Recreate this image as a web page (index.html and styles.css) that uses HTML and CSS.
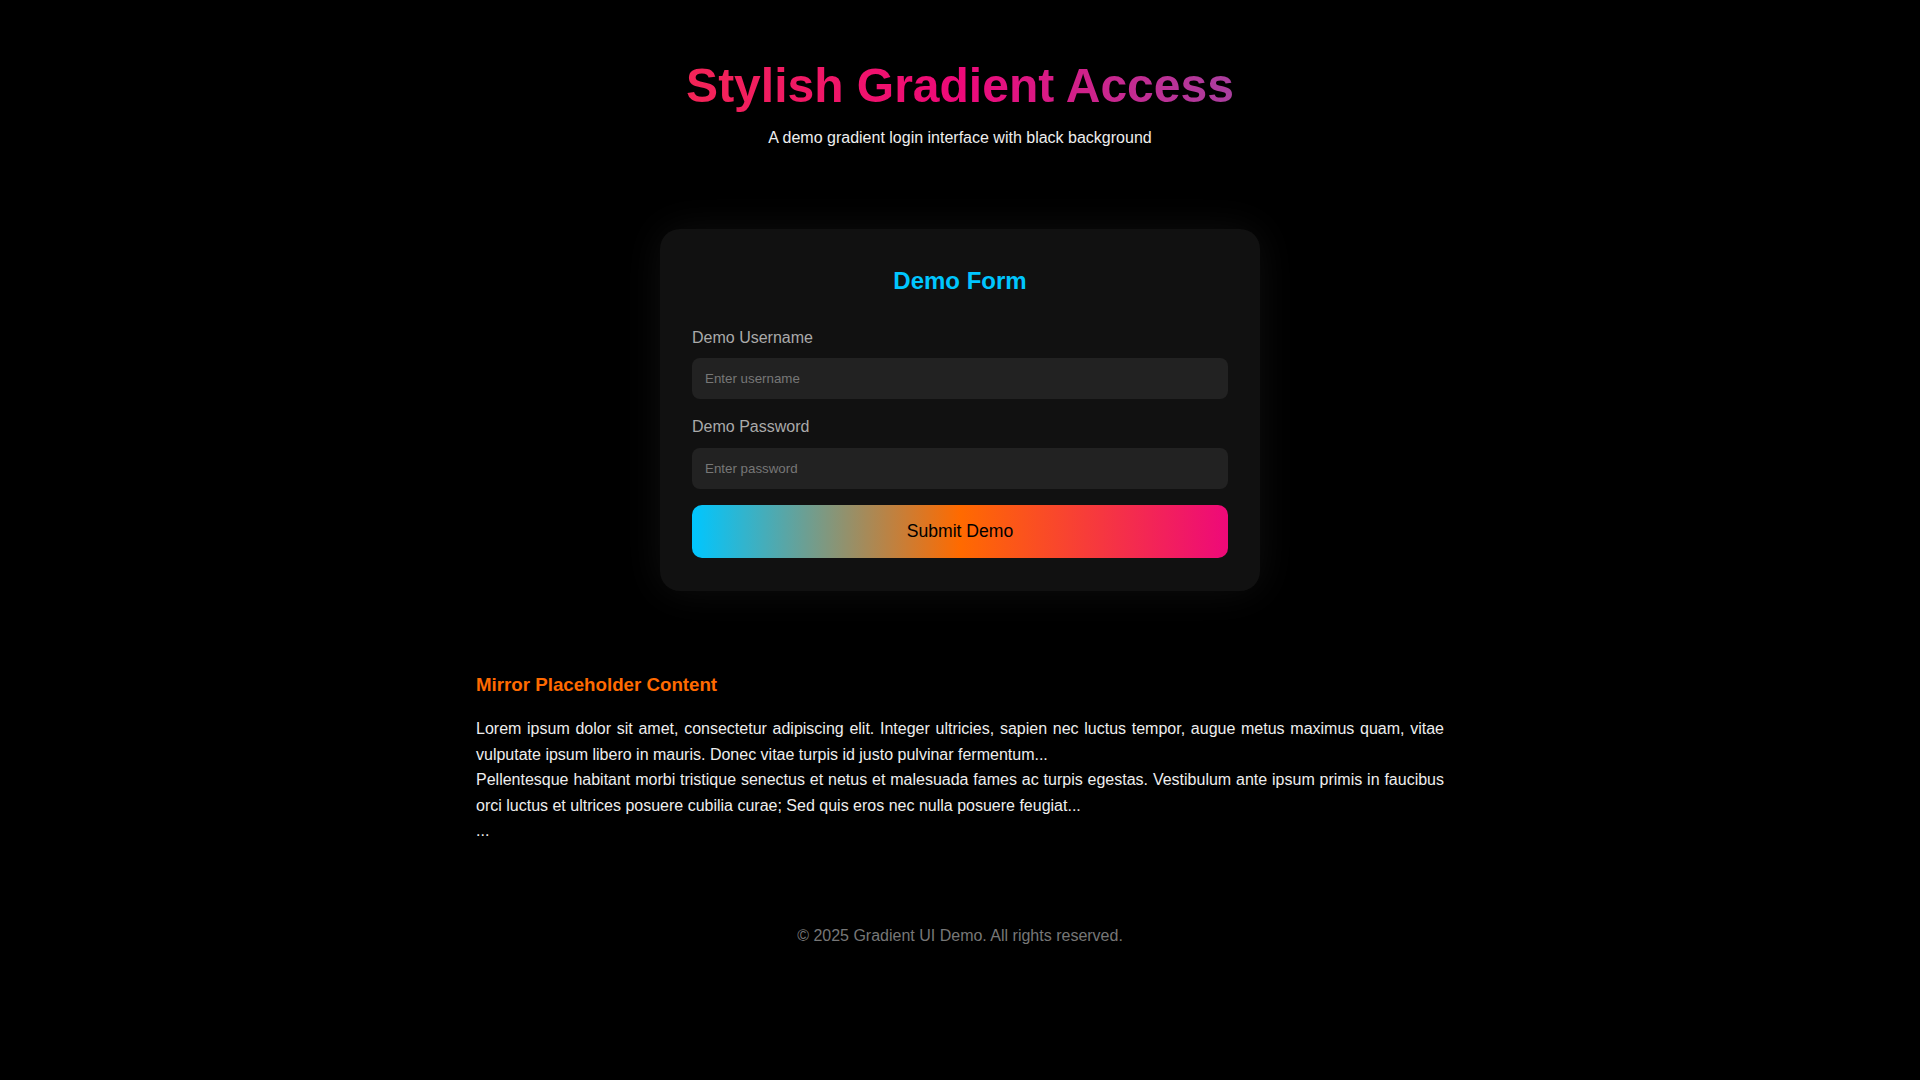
FILE: index.html
```html
<!DOCTYPE html>
<html lang="en">
<head>
<meta charset="utf-8">
<title>Stylish Gradient Access</title>
<link rel="stylesheet" href="styles.css">
</head>
<body>
<header class="site-header">
  <h1 class="title">Stylish Gradient Access</h1>
  <p class="subtitle">A demo gradient login interface with black background</p>
</header>

<main class="main">
  <form class="card" onsubmit="return false;">
    <h2 class="card-title">Demo Form</h2>
    <label class="field-label" for="username">Demo Username</label>
    <input class="field-input" id="username" type="text" placeholder="Enter username">
    <label class="field-label second" for="password">Demo Password</label>
    <input class="field-input" id="password" type="password" placeholder="Enter password">
    <button class="submit" type="submit">Submit Demo</button>
  </form>

  <section class="mirror">
    <h3 class="mirror-title">Mirror Placeholder Content</h3>
    <p class="mirror-text">Lorem ipsum dolor sit amet, consectetur adipiscing elit. Integer ultricies, sapien nec luctus tempor, augue metus maximus quam, vitae vulputate ipsum libero in mauris. Donec vitae turpis id justo pulvinar fermentum...<br>Pellentesque habitant morbi tristique senectus et netus et malesuada fames ac turpis egestas. Vestibulum ante ipsum primis in faucibus orci luctus et ultrices posuere cubilia curae; Sed quis eros nec nulla posuere feugiat...<br>...</p>
  </section>
</main>

<footer class="site-footer">© 2025 Gradient UI Demo. All rights reserved.</footer>
</body>
</html>
```

FILE: styles.css
```css
* { box-sizing: border-box; }

html, body {
  margin: 0;
  padding: 0;
  background: #000;
}

body {
  font-family: "Liberation Sans", Arial, sans-serif;
  color: #eee;
  min-height: 1080px;
}

.site-header {
  text-align: center;
  padding-top: 58px;
}

.title {
  margin: 0 0 16px;
  font-size: 48px;
  font-weight: 700;
  line-height: 55px;
  background: linear-gradient(90deg, #ff6a00, #ee0979, #00c6ff);
  -webkit-background-clip: text;
  background-clip: text;
  color: transparent;
}

.subtitle {
  margin: 0;
  font-size: 16px;
  line-height: 18px;
  color: #eee;
}

.main {
  display: flex;
  flex-direction: column;
  align-items: center;
}

.card {
  margin-top: 82px;
  width: 600px;
  background: #111;
  border-radius: 20px;
  padding: 38px 32px 33px;
  display: flex;
  flex-direction: column;
  box-shadow: 0 0 40px rgba(255, 255, 255, 0.06);
}

.card-title {
  margin: 0 0 34px;
  text-align: center;
  font-size: 24px;
  line-height: 28px;
  font-weight: 700;
  color: #00c6ff;
}

.field-label {
  font-size: 16px;
  line-height: 18px;
  color: #aaa;
  margin-bottom: 11px;
}

.field-label.second {
  margin-top: 19px;
  margin-bottom: 12px;
}

.field-input {
  height: 41px;
  border: none;
  border-radius: 8px;
  background: #222;
  color: #eee;
  padding: 0 13px;
  font-family: "Liberation Sans", Arial, sans-serif;
  font-size: 13.333px;
  outline: none;
}

.field-input::placeholder {
  color: #777;
}

.submit {
  margin-top: 16px;
  height: 53px;
  border: none;
  border-radius: 10px;
  background: linear-gradient(90deg, #00c6ff, #ff6a00, #ee0979);
  color: #000;
  font-family: "Liberation Sans", Arial, sans-serif;
  font-size: 17.6px;
  cursor: pointer;
}

.mirror {
  width: 1000px;
  padding: 0 16px;
  margin-top: 83px;
}

.mirror-title {
  margin: 0 0 20px;
  font-size: 18.72px;
  line-height: 22px;
  font-weight: 700;
  color: #ff6a00;
}

.mirror-text {
  margin: 0;
  font-size: 16px;
  line-height: 25.6px;
  text-align: justify;
  color: #eee;
}

.site-footer {
  margin-top: 83px;
  text-align: center;
  font-size: 16px;
  line-height: 18px;
  color: #777;
}
```
